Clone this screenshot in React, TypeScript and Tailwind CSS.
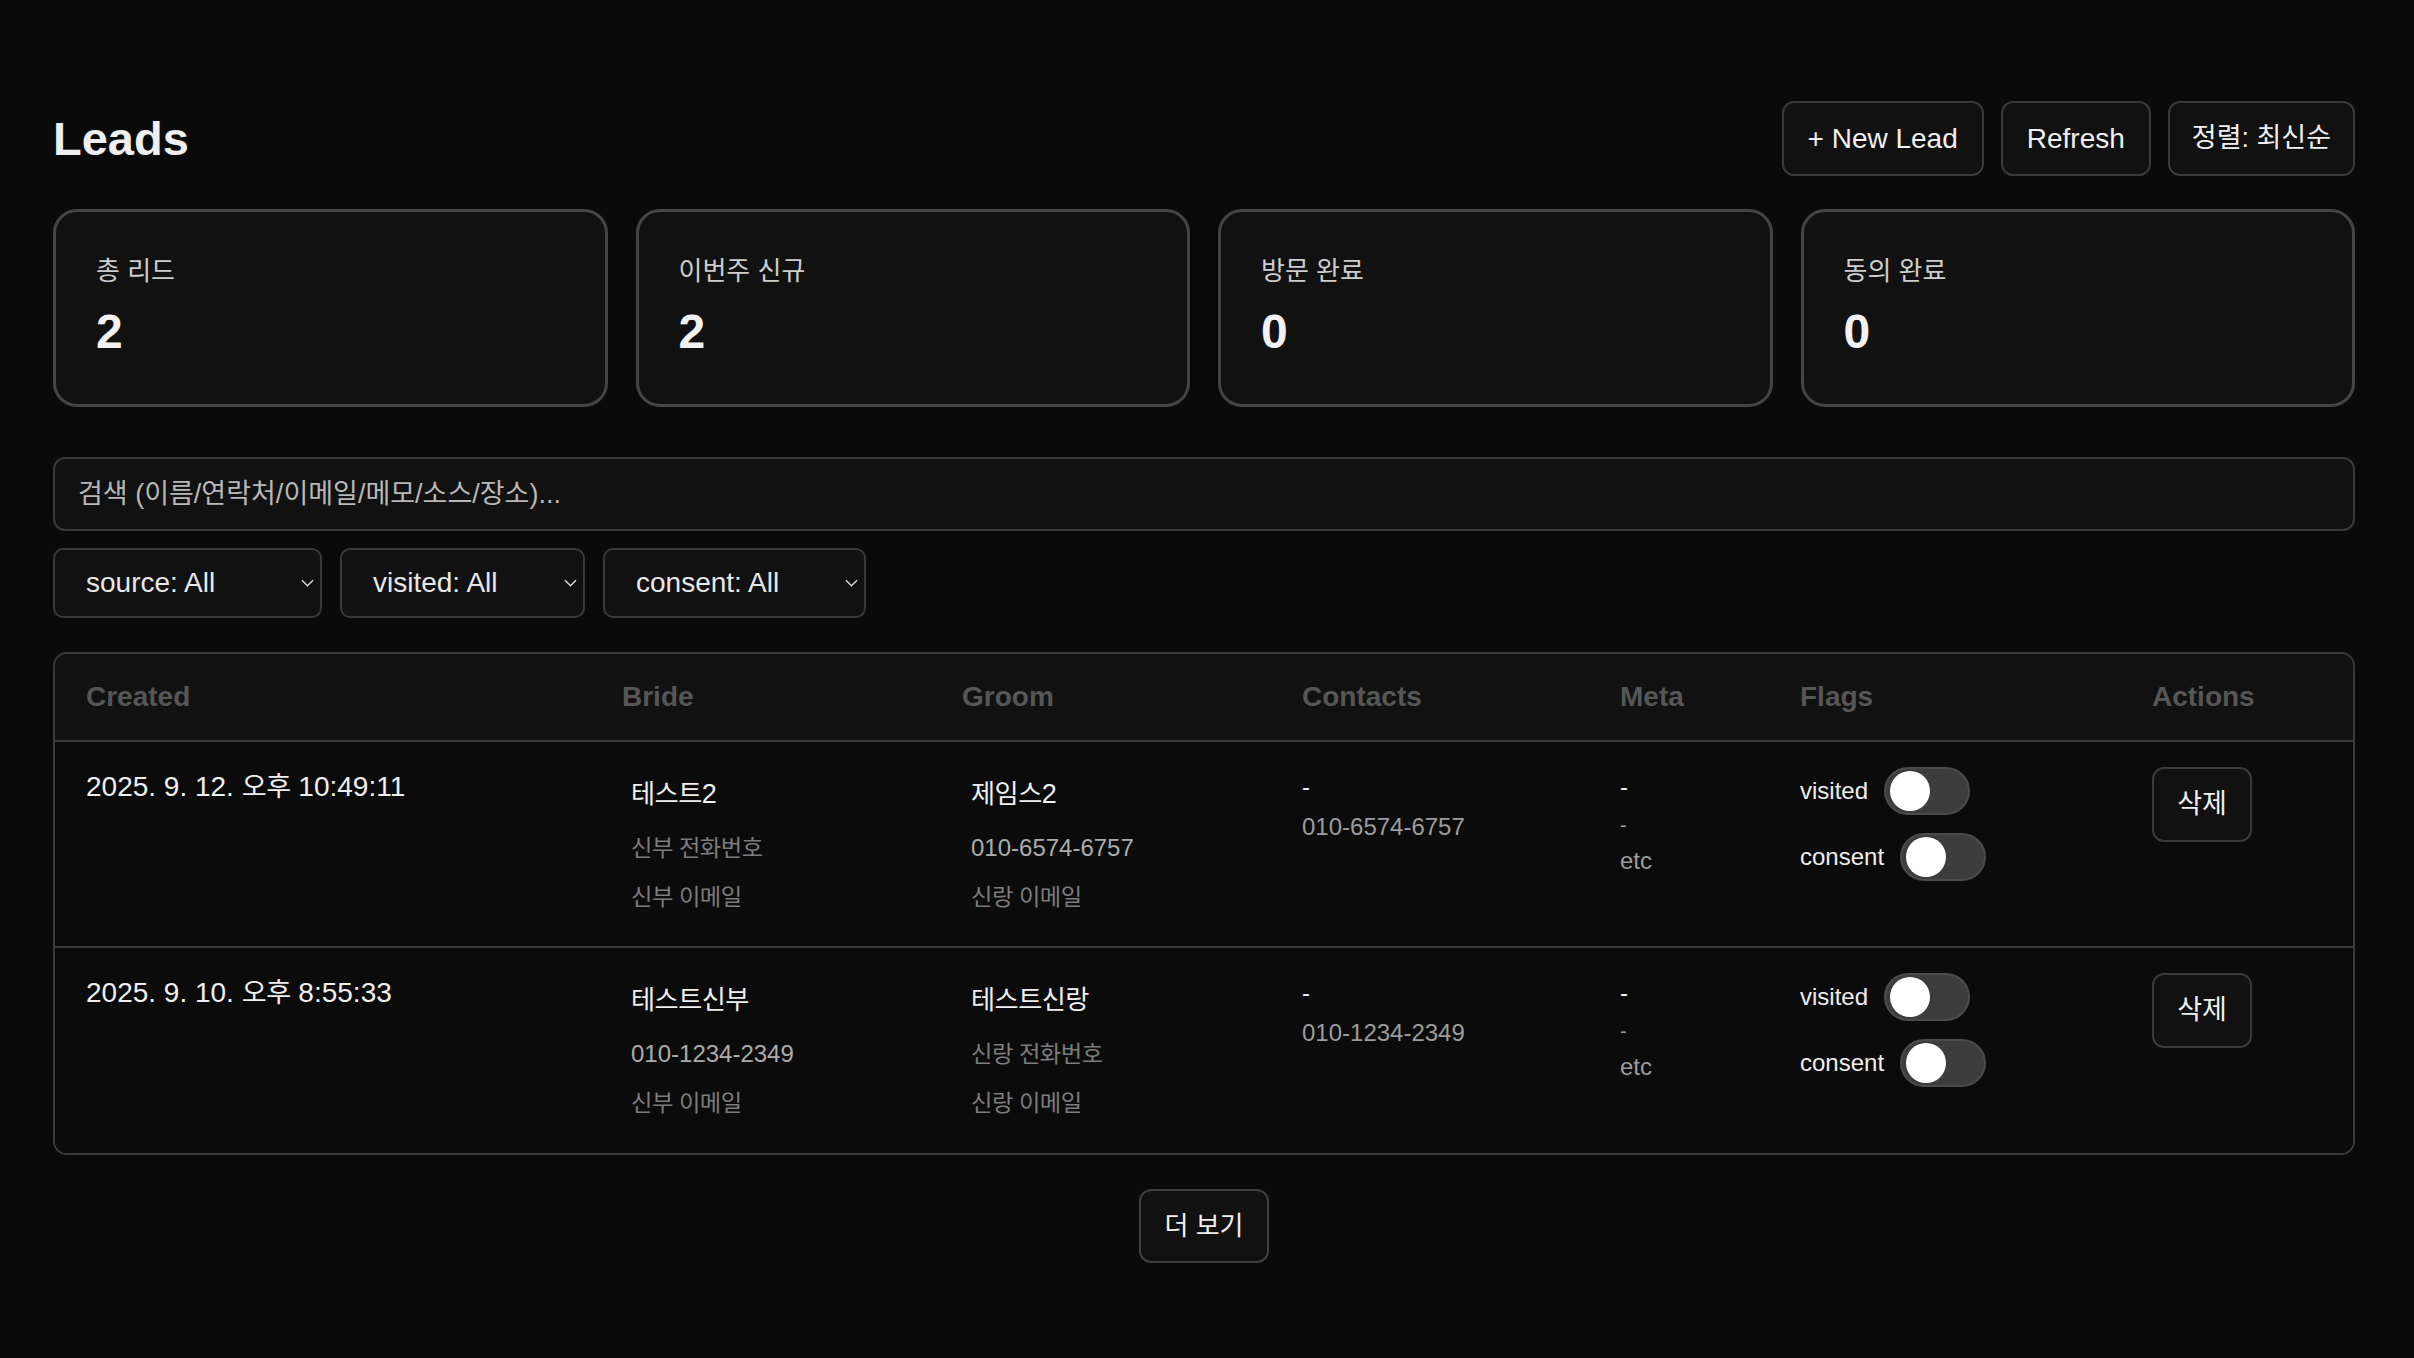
import React from "react";

const K = ({ children }: { children: React.ReactNode }) => (
  <span className="text-[0.97em] tracking-[-0.02em]">{children}</span>
);

const Toggle = () => (
  <div className="w-[86px] h-[48px] rounded-full bg-[#3d3d3d] border-2 border-[#4b4b4b] flex items-center pl-[4px]">
    <div className="w-[40px] h-[40px] rounded-full bg-white" />
  </div>
);

const Chevron = () => (
  <svg width="13" height="8" viewBox="0 0 13 8" fill="none">
    <path d="M1 1.2l5.5 5.5 5.5-5.5" stroke="#dcdcdc" strokeWidth="1.4" />
  </svg>
);

const cols = "grid grid-cols-[536px_340px_340px_318px_180px_352px_1fr]";

type Row = {
  date: React.ReactNode;
  bride: string;
  bridePhone?: string;
  groom: string;
  groomPhone?: string;
  contact: string;
};

const rows: Row[] = [
  {
    date: (
      <>
        2025. 9. 12. <K>오후</K> 10:49:11
      </>
    ),
    bride: "테스트",
    groom: "제임스",
    groomPhone: "010-6574-6757",
    contact: "010-6574-6757",
  },
  {
    date: (
      <>
        2025. 9. 10. <K>오후</K> 8:55:33
      </>
    ),
    bride: "테스트신부",
    bridePhone: "010-1234-2349",
    groom: "테스트신랑",
    contact: "010-1234-2349",
  },
];

const Person = ({
  name,
  suffix,
  phone,
  phonePh,
  emailPh,
}: {
  name: string;
  suffix?: string;
  phone?: string;
  phonePh: string;
  emailPh: string;
}) => (
  <div className="pt-[7px] pl-[9px] flex flex-col">
    <div className="text-[27px] leading-[40px] text-[#f0f0f0]">
      <K>{name}</K>
      {suffix}
    </div>
    <div className="mt-[16px] text-[24px] leading-[36px]">
      {phone ? (
        <span className="text-[#ababab]">{phone}</span>
      ) : (
        <span className="text-[#7c7c7c]">
          <K>{phonePh}</K>
        </span>
      )}
    </div>
    <div className="mt-[13px] text-[24px] leading-[36px] text-[#7c7c7c]">
      <K>{emailPh}</K>
    </div>
  </div>
);

export default function App() {
  return (
    <div className="min-h-screen bg-[#0a0a0a] text-[#ededed] font-['Liberation_Sans','Noto_Sans_CJK_KR',sans-serif]">
      <div className="ml-[53px] w-[2302px] pt-[101px] pb-[80px]">
        {/* Header */}
        <div className="flex items-center justify-between h-[75px]">
          <h1 className="text-[47px] font-bold leading-none text-[#efefef]">Leads</h1>
          <div className="flex gap-[17px]">
            <button className="h-[75px] px-[24px] rounded-[12px] border-2 border-[#3a3a3a] bg-[#111111] text-[28px] text-[#f0f0f0]">
              + New Lead
            </button>
            <button className="h-[75px] px-[24px] rounded-[12px] border-2 border-[#3a3a3a] bg-[#111111] text-[28px] text-[#f0f0f0]">
              Refresh
            </button>
            <button className="h-[75px] px-[22px] rounded-[12px] border-2 border-[#3a3a3a] bg-[#111111] text-[27px] text-[#f0f0f0]">
              정렬: 최신순
            </button>
          </div>
        </div>

        {/* Stat cards */}
        <div className="grid grid-cols-4 gap-[28px] mt-[33px]">
          {[
            ["총 리드", "2"],
            ["이번주 신규", "2"],
            ["방문 완료", "0"],
            ["동의 완료", "0"],
          ].map(([label, value]) => (
            <div
              key={label}
              className="h-[198px] rounded-[24px] border-[3px] border-[#444444] bg-[#111111] px-[40px] pt-[41px]"
            >
              <div className="text-[26px] leading-[36px] text-[#cdcdcd]">{label}</div>
              <div className="mt-[19px] text-[48px] leading-[48px] font-bold text-[#f2f2f2]">{value}</div>
            </div>
          ))}
        </div>

        {/* Search */}
        <div className="mt-[50px] h-[74px] rounded-[12px] border-2 border-[#3a3a3a] bg-[#111111] flex items-center px-[23px]">
          <input
            className="w-full bg-transparent outline-none text-[27px] text-[#e5e5e5] placeholder:text-[#b8b8b8]"
            placeholder="검색 (이름/연락처/이메일/메모/소스/장소)..."
          />
        </div>

        {/* Filters */}
        <div className="mt-[17px] flex gap-[18px]">
          {[
            ["source: All", "w-[269px]"],
            ["visited: All", "w-[245px]"],
            ["consent: All", "w-[263px]"],
          ].map(([t, w]) => (
            <div
              key={t}
              className={`${w} h-[70px] rounded-[10px] border-2 border-[#3a3a3a] bg-[#111111] flex items-center justify-between pl-[31px] pr-[6px] text-[28px] text-[#e8e8e8]`}
            >
              <span>{t}</span>
              <Chevron />
            </div>
          ))}
        </div>

        {/* Table */}
        <div className="mt-[34px] rounded-[14px] border-2 border-[#3a3a3a] overflow-hidden">
          <div className={`${cols} h-[88px] items-center bg-[#111111] border-b-2 border-[#3a3a3a] text-[28px] font-bold text-[#565656]`}>
            {["Created", "Bride", "Groom", "Contacts", "Meta", "Flags", "Actions"].map((h) => (
              <div key={h} className="pl-[31px]">
                {h}
              </div>
            ))}
          </div>
          {rows.map((r, i) => (
            <div
              key={i}
              className={`${cols} ${i === 0 ? "h-[206px] border-b-2 border-[#3a3a3a]" : "h-[205px]"} bg-[#0b0b0b] pt-[25px]`}
            >
              <div className="pl-[31px] text-[28px] leading-[40px] text-[#efefef]">{r.date}</div>
              <div className="pl-[31px]">
                <Person
                  name={r.bride}
                  suffix={i === 0 ? "2" : undefined}
                  phone={r.bridePhone}
                  phonePh="신부 전화번호"
                  emailPh="신부 이메일"
                />
              </div>
              <div className="pl-[31px]">
                <Person
                  name={r.groom}
                  suffix={i === 0 ? "2" : undefined}
                  phone={r.groomPhone}
                  phonePh="신랑 전화번호"
                  emailPh="신랑 이메일"
                />
              </div>
              <div className="pl-[31px] text-[24px] leading-[40px]">
                <div className="text-[#f0f0f0]">-</div>
                <div className="text-[#9c9c9c]">{r.contact}</div>
              </div>
              <div className="pl-[31px]">
                <div className="text-[24px] leading-[40px] text-[#f0f0f0]">-</div>
                <div className="text-[20px] leading-[36px] text-[#9c9c9c]">-</div>
                <div className="text-[24px] leading-[36px] text-[#9c9c9c]">etc</div>
              </div>
              <div className="pl-[31px] flex flex-col gap-[18px]">
                <div className="flex items-center gap-[16px]">
                  <span className="text-[24px] text-[#efefef]">visited</span>
                  <Toggle />
                </div>
                <div className="flex items-center gap-[16px]">
                  <span className="text-[24px] text-[#efefef]">consent</span>
                  <Toggle />
                </div>
              </div>
              <div className="pl-[31px]">
                <button className="h-[75px] w-[100px] rounded-[12px] border-2 border-[#3a3a3a] bg-[#111111] text-[27px] text-[#f0f0f0]">
                  삭제
                </button>
              </div>
            </div>
          ))}
        </div>

        {/* More */}
        <div className="mt-[34px] flex justify-center">
          <button className="h-[74px] w-[130px] rounded-[12px] border-2 border-[#3f3f3f] bg-[#111111] text-[26px] text-[#f0f0f0]">
            더 보기
          </button>
        </div>
      </div>
    </div>
  );
}
